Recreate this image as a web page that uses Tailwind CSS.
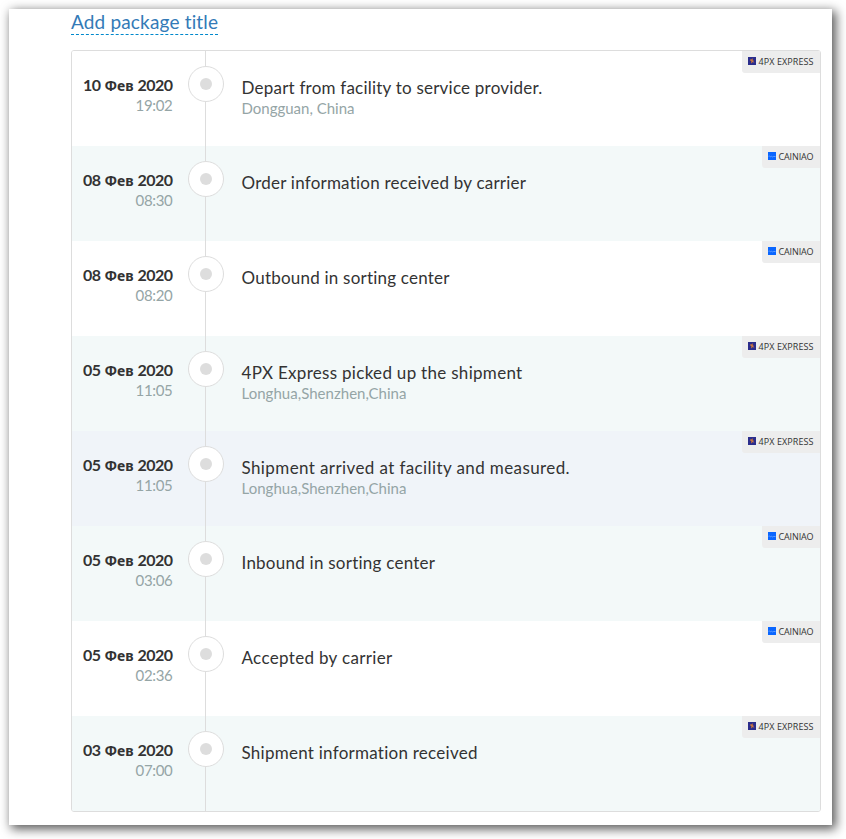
<!DOCTYPE html>
<html lang="en">
<head>
<meta charset="utf-8">
<title>Package tracking</title>
<script src="https://cdn.jsdelivr.net/npm/@tailwindcss/browser@4"></script>
</head>
<body class="h-[839px] overflow-hidden bg-white pt-[9px] pl-[9px] font-['Lato','Noto_Sans',sans-serif]">
<main class="h-[816px] w-[823px] bg-white pl-[62px] shadow-[3px_3px_10px_1px_rgba(0,0,0,0.65)]">
  <div class="flex h-[41px] items-start">
    <a class="mt-px h-[25px] border-b border-dashed border-[#0088cc] text-[19px] leading-[24px] whitespace-nowrap text-[#337ab7]"><span data-w="147.5">Add package title</span></a>
  </div>
  <ul id="events" class="w-[750px] overflow-hidden rounded-[3px] border border-[#dddddd]"></ul>
</main>

<template id="event">
  <li class="flex h-[95px] items-start text-[#333333]">
    <div class="w-[101px] shrink-0 pt-[24px] pr-[0.5px] text-right whitespace-nowrap">
      <div class="flex h-[20px] items-baseline justify-end gap-[4px] text-[16px] leading-[20px] font-bold"><span class="day" data-w="17.5"></span><span class="font-['Noto_Sans'] text-[14px]" data-w="29">Фев</span><span data-w="35">2020</span></div>
      <div class="text-[15px] leading-[21px] text-[#95a5a6]"><span class="time" data-w="37"></span></div>
    </div>
    <div class="ml-[15px] flex h-full w-[36px] shrink-0 flex-col items-center">
      <div class="mr-px h-[15px] w-px bg-[#dddddd]"></div>
      <div class="flex size-[36px] shrink-0 items-center justify-center rounded-full border border-[#dddddd] bg-white"><div class="size-[12px] rounded-full bg-[#dddddd]"></div></div>
      <div class="mr-px w-px flex-1 bg-[#dddddd]"></div>
    </div>
    <div class="ml-[17.5px] flex-1 pt-[26px] whitespace-nowrap">
      <div class="text-[17px] leading-[22px]"><span class="text"></span></div>
      <div class="text-[15px] leading-[19px] text-[#95a5a6]"><span class="place"></span></div>
    </div>
    <div class="flex h-[22px] shrink-0 items-center gap-[2.5px] rounded-bl-[3px] bg-[#ededed] pr-[6.5px] pl-[6px] leading-[22px] whitespace-nowrap" data-badge></div>
  </li>
</template>
<template id="px">
  <svg class="mb-[2px] size-[8px] shrink-0" viewBox="0 0 8 8"><rect width="8" height="8" fill="#2b2d8c"/><path d="M4.8 1.3 2 3.4 3.4 4.3 3 6.6 6.1 4 4.6 3.3Z" fill="#d9772b"/><path d="M2.4 2.2 5.8 5.6" stroke="#b87a6a" stroke-width=".8"/></svg><span class="font-['Open_Sans'] text-[9px]" data-w="55">4PX EXPRESS</span>
</template>
<template id="cn">
  <svg class="mb-[2px] size-[8px] shrink-0" viewBox="0 0 8 8"><rect width="8" height="8" fill="#0a66ff"/><path d="M.5 4.3 1.5 3.9 2.5 4.9 3.5 4.3 4.5 4.9 5.5 4.5H7.5" fill="none" stroke="#7fb2ff" stroke-width=".7"/></svg><span class="font-['Open_Sans'] text-[9px]" data-w="35">CAINIAO</span>
</template>
<script>
const events = [
  ['10','19:02','Depart from facility to service provider.',301,'Dongguan, China',113,'px','bg-white'],
  ['08','08:30','Order information received by carrier',285,'',0,'cn','bg-[#f3f9f9]'],
  ['08','08:20','Outbound in sorting center',208.5,'',0,'cn','bg-white'],
  ['05','11:05','4PX Express picked up the shipment',281,'Longhua,Shenzhen,China',165,'px','bg-[#f3f9f9]'],
  ['05','11:05','Shipment arrived at facility and measured.',328.5,'Longhua,Shenzhen,China',165,'px','bg-[#f0f4f9]'],
  ['05','03:06','Inbound in sorting center',194,'',0,'cn','bg-[#f3f9f9]'],
  ['05','02:36','Accepted by carrier',151,'',0,'cn','bg-white'],
  ['03','07:00','Shipment information received',236.5,'',0,'px','bg-[#f3f9f9]'],
];
const list = document.getElementById('events');
for (const [day, time, text, tw, place, pw, carrier, bg] of events) {
  const row = document.getElementById('event').content.cloneNode(true);
  const q = s => row.querySelector(s);
  q('li').classList.add(bg);
  q('.day').textContent = day;
  q('.time').textContent = time;
  q('.text').textContent = text;
  q('.text').dataset.w = tw;
  q('.place').textContent = place;
  if (pw) q('.place').dataset.w = pw;
  q('[data-badge]').append(document.getElementById(carrier).content.cloneNode(true));
  list.append(row);
}
// Even tracking so each label fills its measure
function track() {
  for (const el of document.querySelectorAll('[data-w]')) {
    el.style.letterSpacing = '0px';
    const gap = (el.dataset.w - el.getBoundingClientRect().width) / el.textContent.length;
    el.style.letterSpacing = gap.toFixed(3) + 'px';
  }
}
track();
window.addEventListener('load', () => { track(); document.fonts.ready.then(track); requestAnimationFrame(track); });
</script>
</body>
</html>
